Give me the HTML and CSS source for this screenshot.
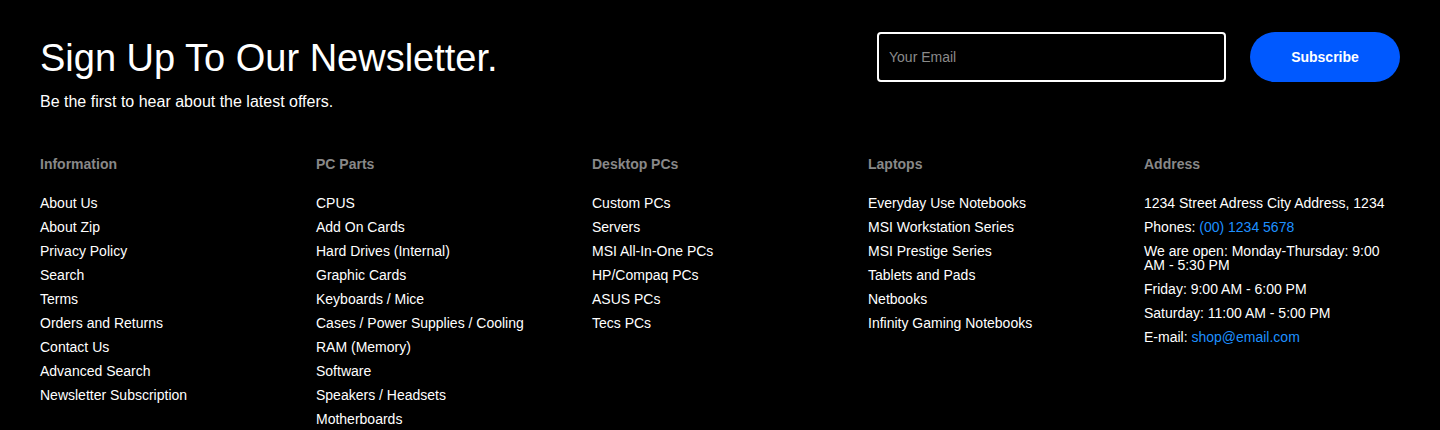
FILE: index.html
```html
<!DOCTYPE html>
<html lang="en">
<head>
<meta charset="utf-8">
<title>Footer</title>
<link rel="stylesheet" href="styles.css">
</head>
<body>
<footer class="footer">
  <section class="signup">
    <div class="signup-text">
      <h2 class="signup-title">Sign Up To Our Newsletter.</h2>
      <p class="signup-sub">Be the first to hear about the latest offers.</p>
    </div>
    <form class="signup-form">
      <input class="signup-input" type="email" placeholder="Your Email">
      <button class="signup-btn" type="button">Subscribe</button>
    </form>
  </section>
  <section class="cols">
    <div class="col">
      <h3 class="col-title">Information</h3>
      <ul class="col-list">
        <li>About Us</li>
        <li>About Zip</li>
        <li>Privacy Policy</li>
        <li>Search</li>
        <li>Terms</li>
        <li>Orders and Returns</li>
        <li>Contact Us</li>
        <li>Advanced Search</li>
        <li>Newsletter Subscription</li>
      </ul>
    </div>
    <div class="col">
      <h3 class="col-title">PC Parts</h3>
      <ul class="col-list">
        <li>CPUS</li>
        <li>Add On Cards</li>
        <li>Hard Drives (Internal)</li>
        <li>Graphic Cards</li>
        <li>Keyboards / Mice</li>
        <li>Cases / Power Supplies / Cooling</li>
        <li>RAM (Memory)</li>
        <li>Software</li>
        <li>Speakers / Headsets</li>
        <li>Motherboards</li>
      </ul>
    </div>
    <div class="col">
      <h3 class="col-title">Desktop PCs</h3>
      <ul class="col-list">
        <li>Custom PCs</li>
        <li>Servers</li>
        <li>MSI All-In-One PCs</li>
        <li>HP/Compaq PCs</li>
        <li>ASUS PCs</li>
        <li>Tecs PCs</li>
      </ul>
    </div>
    <div class="col">
      <h3 class="col-title">Laptops</h3>
      <ul class="col-list">
        <li>Everyday Use Notebooks</li>
        <li>MSI Workstation Series</li>
        <li>MSI Prestige Series</li>
        <li>Tablets and Pads</li>
        <li>Netbooks</li>
        <li>Infinity Gaming Notebooks</li>
      </ul>
    </div>
    <div class="col">
      <h3 class="col-title">Address</h3>
      <ul class="col-list">
        <li>1234 Street Adress City Address, 1234</li>
        <li>Phones: <span class="accent">(00) 1234 5678</span></li>
        <li>We are open: Monday-Thursday: 9:00 AM - 5:30 PM</li>
        <li>Friday: 9:00 AM - 6:00 PM</li>
        <li>Saturday: 11:00 AM - 5:00 PM</li>
        <li>E-mail: <span class="accent">shop@email.com</span></li>
      </ul>
    </div>
  </section>
</footer>
</body>
</html>
```

FILE: styles.css
```css
html, body {
  margin: 0;
  padding: 0;
  background: #000;
}

body {
  font-family: "Liberation Sans", Arial, sans-serif;
  color: #fff;
}

.footer {
  padding: 32px 40px 0;
}

.signup {
  display: flex;
  justify-content: space-between;
  align-items: flex-start;
}

.signup-title {
  margin: 4px 0 0;
  font-size: 38px;
  font-weight: 400;
  line-height: 44px;
}

.signup-sub {
  margin: 13px 0 0;
  font-size: 16px;
  line-height: 18px;
}

.signup-form {
  display: flex;
  gap: 24px;
  margin: 0;
}

.signup-input {
  box-sizing: border-box;
  width: 349px;
  height: 50px;
  margin-left: 1px;
  border: 2px solid #fff;
  border-radius: 4px;
  background: #000;
  color: #fff;
  padding: 0 10px;
  font-family: "Liberation Sans", Arial, sans-serif;
  font-size: 14px;
  outline: none;
}

.signup-input::placeholder {
  color: #8a8a8a;
}

.signup-btn {
  width: 150px;
  height: 50px;
  border: none;
  border-radius: 25px;
  background: #0059ff;
  color: #fff;
  font-family: "Liberation Sans", Arial, sans-serif;
  font-size: 14px;
  font-weight: 700;
}

.cols {
  display: grid;
  grid-template-columns: repeat(5, 256px);
  column-gap: 20px;
  margin-top: 45px;
}

.col-title {
  margin: 0;
  font-size: 14px;
  font-weight: 700;
  line-height: 16px;
  color: #888;
}

.col-list {
  list-style: none;
  margin: 24px 0 0;
  padding: 0;
  font-size: 14px;
  line-height: 14px;
}

.col-list li {
  margin-bottom: 10px;
}

.accent {
  color: #1e90ff;
}
```
